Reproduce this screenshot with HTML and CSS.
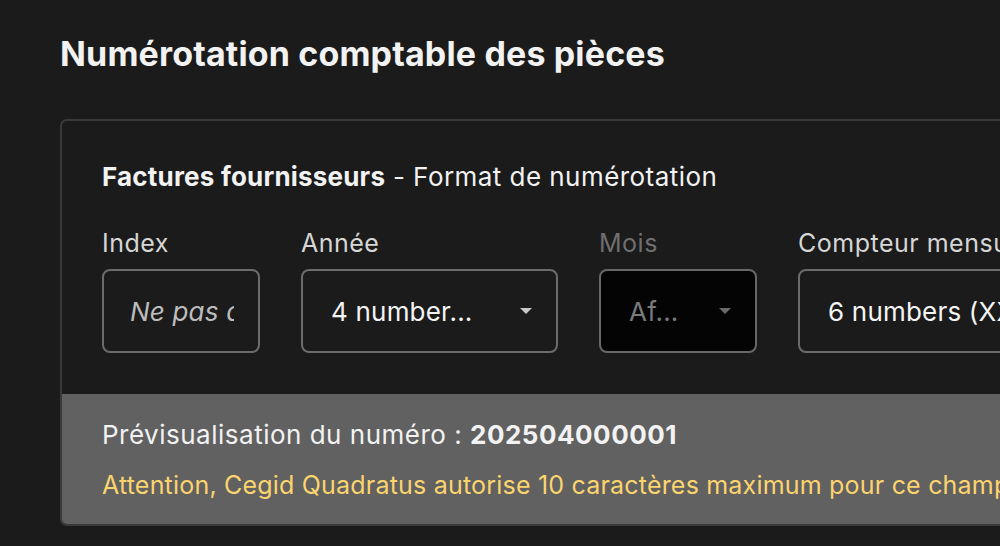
FILE: index.html
```html
<!DOCTYPE html>
<html lang="fr">

<head>
    <meta charset="UTF-8">
    <meta name="viewport" content="width=device-width, initial-scale=1.0">
    <title>Numérotation comptable des pièces</title>
    <link rel="stylesheet" href="styles.css">
</head>

<body>
    <div class="page">
        <h1 class="title">Numérotation comptable des pièces</h1>

        <div class="card">
            <div class="card-body">
                <p class="card-head"><b>Factures fournisseurs</b> - Format de numérotation</p>

                <div class="fields">
                    <div class="field field-sm">
                        <label>Index</label>
                        <div class="box box-input"><span class="placeholder">Ne pas afficher</span></div>
                    </div>
                    <div class="field field-md">
                        <label>Année</label>
                        <div class="box box-select">
                            <span class="value">4 number...</span>
                            <span class="caret"></span>
                        </div>
                    </div>
                    <div class="field field-sm disabled">
                        <label>Mois</label>
                        <div class="box box-select">
                            <span class="value">Af...</span>
                            <span class="caret"></span>
                        </div>
                    </div>
                    <div class="field field-lg">
                        <label>Compteur mensuel</label>
                        <div class="box box-select">
                            <span class="value">6 numbers (XXXXXX)</span>
                            <span class="caret"></span>
                        </div>
                    </div>
                </div>
            </div>

            <div class="preview">
                <p class="preview-line">Prévisualisation du numéro : <b>202504000001</b></p>
                <p class="warning">Attention, Cegid Quadratus autorise 10 caractères maximum pour ce champ.</p>
            </div>
        </div>
    </div>
</body>

</html>
```

FILE: styles.css
```css
html,
body {
    margin: 0;
    background: #1b1b1b;
    overflow: hidden;
}

body {
    font-family: Inter, "Liberation Sans", sans-serif;
    color: #f2f2f2;
}

.page {
    padding: 34px 0 0 60px;
    width: 1300px;
}

.title {
    margin: 0 0 45px;
    font-size: 34px;
    font-weight: 700;
    letter-spacing: 0.15px;
    line-height: 40px;
}

.card {
    width: 1200px;
    border: 2px solid #3a3a3a;
    border-radius: 7px;
    overflow: hidden;
}

.card-body {
    padding: 38px 40px 41px;
}

.card-head {
    margin: 0;
    font-size: 26px;
    line-height: 36px;
    letter-spacing: 0.45px;
}

.card-head b {
    font-weight: 700;
    letter-spacing: 0.2px;
}

.fields {
    display: flex;
    gap: 41px;
    margin-top: 32px;
}

.field label {
    display: block;
    font-size: 25px;
    line-height: 32px;
    color: #d6d6d6;
    letter-spacing: 0.5px;
    margin-bottom: 10px;
    white-space: nowrap;
}

.field-sm {
    width: 158px;
}

.field-md {
    width: 257px;
}

.field-lg {
    width: 360px;
}

.box {
    box-sizing: border-box;
    height: 84px;
    border: 2px solid #6c6c6c;
    border-radius: 8px;
    display: flex;
    align-items: center;
    padding: 0 24px 0 28px;
    font-size: 26px;
    letter-spacing: 0.2px;
    overflow: hidden;
    white-space: nowrap;
}

.box-input {
    padding-left: 26px;
}

.placeholder {
    flex: 1;
    overflow: hidden;
    font-style: italic;
    color: #bdbdbd;
}

.box-select .value {
    flex: 1;
    color: #f4f4f4;
}

.caret {
    width: 0;
    height: 0;
    border-left: 6px solid transparent;
    border-right: 6px solid transparent;
    border-top: 6px solid #c8c8c8;
}

.disabled label {
    color: #6f6f6f;
}

.disabled .box {
    background: #040404;
    border-color: #686868;
}

.disabled .box .value {
    color: #7a7a7a;
}

.disabled .caret {
    border-top-color: #6a6a6a;
}

.preview {
    background: #616161;
    padding: 23px 40px 21px;
}

.preview-line {
    margin: 0;
    font-size: 26px;
    line-height: 36px;
    letter-spacing: 0.5px;
}

.preview-line b {
    font-weight: 700;
    letter-spacing: 0.5px;
}

.warning {
    margin: 14px 0 0;
    font-size: 25px;
    line-height: 36px;
    letter-spacing: 0.2px;
    color: #fbd46e;
    white-space: nowrap;
}
```
